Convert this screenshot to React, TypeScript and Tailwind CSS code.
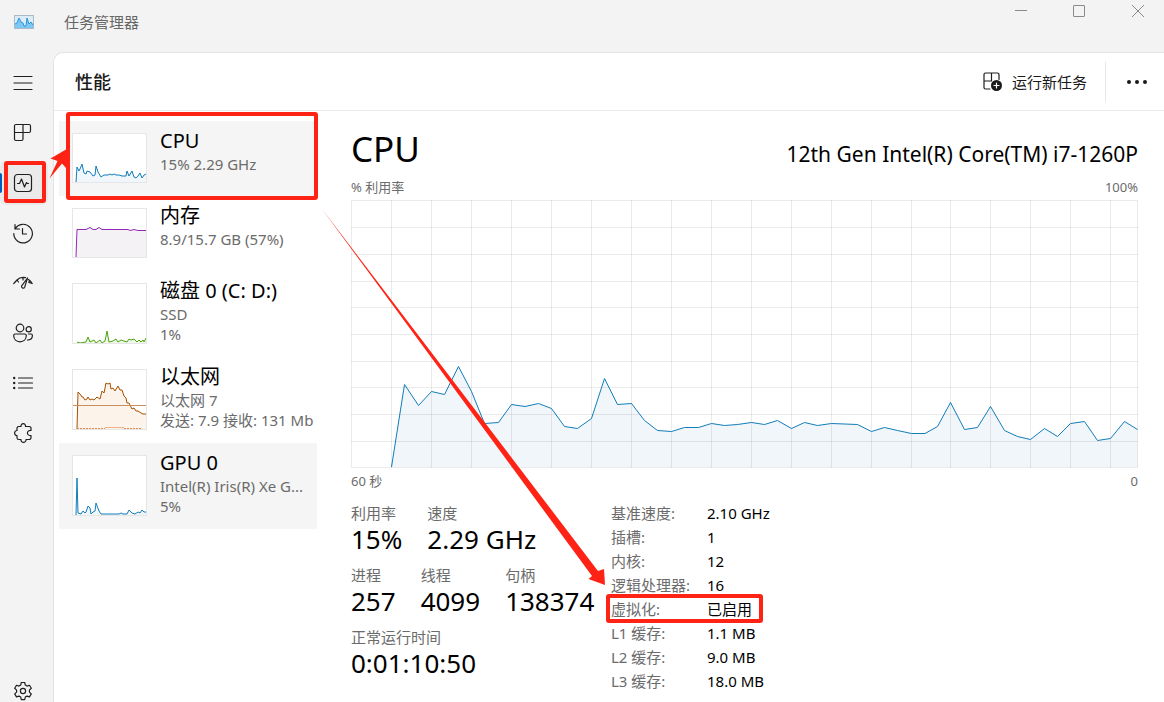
import { useState } from 'react';
import type { ReactNode } from 'react';

const UI_FONT = "font-['Noto_Sans','Noto_Sans_CJK_SC',sans-serif]";

interface Point {
  x: number;
  y: number;
}

function parse(points: string): Point[] {
  return points.split(' ').map((pair) => {
    const [x, y] = pair.split(',').map(Number);
    return { x, y };
  });
}

const CPU_HISTORY =
  '40.5,267 53.5,184.5 67.5,205.5 80.5,191.5 93.5,194.5 107.5,166.5 120.5,191.5 133.5,223.5 147.5,222.5 160.5,204.5 174,206.5 187.5,203.5 200.5,208.5 213.5,226.5 226.5,228.5 240.5,218.5 253.5,178.5 266.5,204.5 280.5,203.5 293.5,220.5 306.5,230.5 320.5,231.5 333.5,227.5 347.5,227.5 360.5,223.5 373.5,225.5 386.5,224.5 400.5,222.5 413.5,224.5 426.5,220.5 440.5,228.5 453.5,222.5 466.5,225.5 480.5,223.5 506.5,224.5 520.5,231.5 533.5,227.5 546.5,230.5 560.5,233.5 574,233.5 586.5,226.5 599.5,202.5 613.5,229.5 626.5,227.5 639.5,206.5 653.5,230.5 666.5,236.5 679.5,239.5 693.5,228.5 706.5,236.5 719.5,223.5 733.5,221.5 746.5,240.5 759.5,238.5 773.5,221.5 786.5,229.5';

const GRID_X = [40.5, 80.5, 120.5, 160.5, 200.5, 240.5, 280.5, 320.5, 360.5, 400.5, 440.5, 480.5, 520.5, 560.5, 599.5, 639.5, 679.5, 719.5, 759.5];
const GRID_Y = [27.5, 54.5, 81.5, 107.5, 134.5, 161.5, 187.5, 214.5, 241.5];

interface Resource {
  id: string;
  title: string;
  lines: string[];
  stroke: string;
  fill: string;
  height: number;
  points: string;
  marked?: boolean;
  hovered?: boolean;
  extra?: ReactNode;
}

const RESOURCES: Resource[] = [
  {
    id: 'cpu',
    title: 'CPU',
    lines: ['15% 2.29 GHz'],
    stroke: '#117dbb',
    fill: '#f1f6fa',
    height: 50,
    points:
      '4,49 5,34 7,38 8,36 10,31 12,40 14,41 15,38 18,39 21,43 23,42 24,33 26,39 29,44 32,42 36,42 38,41 40,42 42,41 44,42 47,42 50,43 54,43 55,38 57,43 60,38 62,44 64,45 66,43 68,40 70,45 72,42 74,41',
    marked: true,
  },
  {
    id: 'memory',
    title: '内存',
    lines: ['8.9/15.7 GB (57%)'],
    stroke: '#9528b4',
    fill: '#f4f2f4',
    height: 50,
    points: '4,49 5,21.5 14,21.5 18,19.5 21,21.5 24,21.5 27,19.5 30,21.5 56,21.5 58,22.5 62,21.5 66,22.5 74,22.5',
  },
  {
    id: 'disk',
    title: '磁盘 0 (C: D:)',
    lines: ['SSD', '1%'],
    stroke: '#4da60c',
    fill: '#eff7e9',
    height: 61,
    points:
      '5,59 8,60 14,59 16,54 18,59 22,57 24,60 28,57 30,60 33,58 35,48 37,59 41,58 44,56 46,59 49,57 52,58 55,59 57,56 59,57 62,56 65,59 67,57 69,59 71,57 72,59 74,55',
  },
  {
    id: 'ethernet',
    title: '以太网',
    lines: ['以太网 7', '发送: 7.9 接收: 131 Mb'],
    stroke: '#a74f01',
    fill: '#fcf3eb',
    height: 61,
    points:
      '5,60 6,23 8,25 10,28 11,28 13,31 15,30 16,28 18,31 20,30 22,31 25,28 28,30 30,22 32,24 34,14 36,15 38,14 39,20 41,19 43,22 46,17 48,21 50,21 52,27 54,29 55,34 57,34 60,40 62,39 64,42 66,42 69,44 71,45 74,45',
    extra: (
      <>
        <path d="M1 36.5H74" stroke="#c98f5c" />
        <path d="M5 59.500H33M52 59.500H70" stroke="#e08a50" strokeDasharray="2 1" />
        <path d="M33 58.500H52" stroke="#eeb18c" />
      </>
    ),
  },
  {
    id: 'gpu',
    title: 'GPU 0',
    lines: ['Intel(R) Iris(R) Xe G...', '5%'],
    stroke: '#117dbb',
    fill: '#f1f6fa',
    height: 61,
    points:
      '4,60 5,23 6,58 9,59 11,56 13,58 14,57 16,51 18,53 19,59 21,57 23,56 24,48 27,56 29,59 47,59 49,58 51,59 55,59 57,55 60,58 63,59 66,57 68,58 70,55 72,57 74,57',
    hovered: true,
  },
];

const SPECS = [
  ['基准速度:', '2.10 GHz'],
  ['插槽:', '1'],
  ['内核:', '12'],
  ['逻辑处理器:', '16'],
  ['虚拟化:', '已启用'],
  ['L1 缓存:', '1.1 MB'],
  ['L2 缓存:', '9.0 MB'],
  ['L3 缓存:', '18.0 MB'],
];

function Icon({ children }: { children: ReactNode }) {
  return (
    <svg
      className="h-5 w-5 shrink-0 overflow-visible"
      viewBox="0 0 20 20"
      fill="none"
      stroke="#1f1f1f"
      strokeWidth="1.2"
      strokeLinecap="round"
      strokeLinejoin="round"
      aria-hidden="true"
    >
      {children}
    </svg>
  );
}

const NAV_ITEMS = [
  {
    id: 'processes',
    label: '进程',
    icon: <path d="M3 1.500h13a1.500 1.500 0 0 1 1.500 1.500v5a1.500 1.500 0 0 1-1.500 1.500H10v6.500a1.500 1.500 0 0 1-1.500 1.500H3a1.500 1.500 0 0 1-1.500-1.500v-13a1.500 1.500 0 0 1 1.500-1.500zM1.500 9.500H10V1.500" />,
  },
  {
    id: 'performance',
    label: '性能',
    icon: (
      <>
        <rect x="1.500" y="1.500" width="17" height="17" rx="3" />
        <path d="M4.500 10.500H6.500L8.500 6L11.500 14L13.500 9.500L14.200 10.500H15.500" />
      </>
    ),
  },
  {
    id: 'history',
    label: '应用历史记录',
    icon: (
      <>
        <path d="M2 6A9.300 9.300 0 1 1 .8 10.500M2 1.500V6H6.500" />
        <path d="M9.500 5.500V11H13.500" />
      </>
    ),
  },
  {
    id: 'startup',
    label: '启动应用',
    icon: (
      <>
        <path d="M.8 10.500L4 7L5.500 9M4 7C6 4.800 9 4 12.500 4.600M10 4.500V7M14.500 5L11.700 14.200a1.700 1.700 0 0 1-3.200-1L14.500 5zM15.500 6.500C17 7.500 18.300 9 19.200 10.500M19.200 10.500L15.800 9.500L16.500 7.500" />
      </>
    ),
  },
  {
    id: 'users',
    label: '用户',
    icon: (
      <>
        <circle cx="7" cy="5" r="3.800" />
        <circle cx="15.700" cy="6.300" r="2.600" />
        <path d="M2.200 11h9.600a1.500 1.500 0 0 1 1.500 1.500c0 4-2.800 6.300-6.300 6.300S.7 16.500.7 12.500A1.500 1.500 0 0 1 2.200 11zM15.500 11H18a1.500 1.500 0 0 1 1.400 1.500c0 3.300-2 4.700-5 4.500" />
      </>
    ),
  },
  {
    id: 'details',
    label: '详细信息',
    icon: (
      <>
        <path d="M5.500 5H19.500M5.500 10H19.500M5.500 15H19.500" />
        <path d="M1.200 5h.01M1.200 10h.01M1.200 15h.01" strokeWidth="2.400" />
      </>
    ),
  },
  {
    id: 'services',
    label: '服务',
    icon: (
      <path d="M5 3.500H8C7.500-.3 13-.3 12.500 3.500H16A1.800 1.800 0 0 1 18 5.300V7.500C13.200 7 13.200 13 18 12.500V14.700A1.800 1.800 0 0 1 16 16.500H13C13.300 20.300 7.500 20.300 8 16.500H5.800A1.800 1.800 0 0 1 4 14.700V12.500C.8 12.500.8 7.500 4 7.500V4.800z" />
    ),
  },
];

function AreaPath({ points, base, stroke, fill }: { points: string; base: number; stroke: string; fill: string }) {
  const list = parse(points);
  const first = list[0];
  const last = list[list.length - 1];
  return (
    <>
      <polygon points={`${first.x},${base} ${points} ${last.x},${base}`} fill={fill} />
      <polyline points={points} fill="none" stroke={stroke} vectorEffect="non-scaling-stroke" />
    </>
  );
}

function ResourceItem({ item }: { item: Resource }) {
  return (
    <button
      type="button"
      className={`relative flex w-full items-start gap-[13px] pl-[13px] text-left ${
        item.height === 50 ? 'h-[75px]' : 'h-[86px]'
      } ${item.marked || item.hovered ? 'bg-[#f5f5f5]' : ''}`}
    >
      <svg className="mt-3 w-[75px] shrink-0 bg-white" height={item.height} viewBox={`0 0 75 ${item.height}`} aria-hidden="true">
        <AreaPath points={item.points} base={item.height - 1} stroke={item.stroke} fill={item.fill} />
        {item.extra}
        <rect x="0.500" y="0.500" width="74" height={item.height - 1} fill="none" stroke="#e6e6e6" />
      </svg>
      <span className="min-w-0 flex-1 overflow-hidden whitespace-nowrap pt-2">
        <span className="mb-px block text-[20px] leading-6 text-black">{item.title}</span>
        {item.lines.map((line) => (
          <span key={line} className="block text-[15px] leading-5 text-[#6b6b6b]">
            {line}
          </span>
        ))}
      </span>
      {item.marked && (
        <span className="absolute -top-[9px] -right-px -bottom-[4px] left-[7px] rounded-[3px] border-4 border-[#ff2316]" />
      )}
    </button>
  );
}

function Stat({ label, value }: { label: string; value: string }) {
  return (
    <div>
      <dt className="text-[15px] leading-5 text-[#6b6b6b]">{label}</dt>
      <dd className="text-[26px] leading-8 text-black">{value}</dd>
    </div>
  );
}

export default function App() {
  const [page, setPage] = useState('performance');

  return (
    <div className={`relative flex min-h-screen flex-col overflow-hidden bg-[#f3f3f3] text-black ${UI_FONT}`}>
      <header className="flex h-[52px] items-start justify-between">
        <div className="flex h-11 items-center gap-[30px] pl-[14px]">
          <svg className="h-[14px] w-5" viewBox="0 0 20 14" aria-hidden="true">
            <rect x="0.500" y="0.500" width="19" height="13" fill="#dcecf6" stroke="#a9b9c6" />
            <path d="M1 13V9L3 8L5 3L7 7L9 8L10 11L12 11L13 3L15 9L17 7L19 10V13z" fill="#7cc8f5" />
            <path d="M1 9L3 8L5 3L7 7L9 8L10 11L12 11L13 3L15 9L17 7L19 10" fill="none" stroke="#2b93da" />
          </svg>
          <h1 className="text-[15px] leading-5 text-[#666666]">任务管理器</h1>
        </div>
        <div className="flex">
          <button type="button" aria-label="最小化" className="flex h-[22px] w-[58px] items-center justify-center">
            <svg className="h-3 w-3" viewBox="0 0 12 12" stroke="#8a8a8a" aria-hidden="true">
              <path d="M0 5.500H12" />
            </svg>
          </button>
          <button type="button" aria-label="最大化" className="flex h-[22px] w-[58px] items-center justify-center">
            <svg className="h-3 w-3" viewBox="0 0 12 12" fill="none" stroke="#8a8a8a" aria-hidden="true">
              <rect x="0.500" y="0.500" width="11" height="11" rx="0.500" />
            </svg>
          </button>
          <button type="button" aria-label="关闭" className="flex h-[22px] w-14 items-center justify-center pl-1">
            <svg className="h-3 w-3" viewBox="0 0 12 12" stroke="#8a8a8a" aria-hidden="true">
              <path d="M0 0L12 12M12 0L0 12" />
            </svg>
          </button>
        </div>
      </header>

      <div className="flex flex-1">
        <nav className="flex w-[53px] shrink-0 flex-col pt-[6px]">
          <button type="button" aria-label="打开导航" className="flex h-[50px] items-center pl-[13px]">
            <Icon>
              <path d="M1 3.500H19M1 10H19M1 16.500H19" />
            </Icon>
          </button>
          {NAV_ITEMS.map((item) => (
            <button
              key={item.id}
              type="button"
              aria-label={item.label}
              aria-current={item.id === page ? 'page' : undefined}
              onClick={() => setPage(item.id)}
              className="relative flex h-[50px] items-center"
            >
              <span
                className={`flex h-11 w-12 items-center rounded-md pl-[13px] ${item.id === page ? 'bg-[#eaeaea]' : ''}`}
              >
                <Icon>{item.icon}</Icon>
              </span>
              {item.id === page && <span className="absolute left-0 h-5 w-[2px] rounded-r-sm bg-[#005fb8]" />}
              {item.id === 'performance' && (
                <span className="absolute top-[3px] left-1 h-[42px] w-[42px] rounded-[3px] border-4 border-[#ff2316]" />
              )}
            </button>
          ))}
          <button type="button" aria-label="设置" className="mt-auto flex h-[22px] items-center pl-[13px]">
            <Icon>
              <path d="M8.300 1.500h3.400l.6 2.600 1.700 1 2.500-.8 1.800 3-1.900 1.800v2l1.900 1.800-1.800 3-2.500-.8-1.700 1-.6 2.600H8.300l-.6-2.600-1.700-1-2.500.8-1.800-3 1.900-1.800v-2L1.700 7.300l1.800-3 2.500.8 1.700-1z" />
              <circle cx="10" cy="10" r="2.600" />
            </Icon>
          </button>
        </nav>

        <main className="flex min-w-0 flex-1 flex-col rounded-tl-[10px] border-t border-l border-[#e3e3e3] bg-white">
          <div className="flex h-[58px] items-center border-b border-[#ebebeb] pt-px pl-[21px]">
            <h2 className="text-[18px] leading-6 font-medium text-[#1a1a1a]">性能</h2>
            <button type="button" className="ml-auto flex items-center gap-[9px] pr-[18px]">
              <Icon>
                <path d="M7 17H2.500A1.500 1.500 0 0 1 1 15.500V2.500A1.500 1.500 0 0 1 2.500 1h12A1.500 1.500 0 0 1 16 2.500V7.500M1 9H8.500V1" />
                <circle cx="13.500" cy="13.500" r="5.500" fill="#1a1a1a" stroke="none" />
                <path d="M13.500 11V16M11 13.500H16" stroke="white" />
              </Icon>
              <span className="text-[15px] leading-5 text-[#1a1a1a]">运行新任务</span>
            </button>
            <div className="h-10 w-px bg-[#e8e8e8]" />
            <button type="button" aria-label="更多选项" className="flex h-10 w-[58px] items-center justify-center pl-1">
              <svg className="h-1 w-5" viewBox="0 0 20 4" fill="#1a1a1a" aria-hidden="true">
                <circle cx="2" cy="2" r="2" />
                <circle cx="10" cy="2" r="2" />
                <circle cx="18" cy="2" r="2" />
              </svg>
            </button>
          </div>

          <div className="flex flex-1 pt-[10px] pr-[26px] pl-[5px]">
            <aside className="w-[258px] shrink-0">
              {RESOURCES.map((item) => (
                <ResourceItem key={item.id} item={item} />
              ))}
            </aside>

            <section className="ml-[34px] min-w-0 flex-1">
              <div className="flex items-baseline justify-between pt-1">
                <h3 className="text-[35px] leading-[48px]">CPU</h3>
                <p className="text-[21px] leading-6">12th Gen Intel(R) Core(TM) i7-1260P</p>
              </div>
              <div className="mt-1 flex justify-between text-[13px] leading-5 text-[#6b6b6b]">
                <span>% 利用率</span>
                <span>100%</span>
              </div>
              <svg
                className="mt-[3px] block h-[268px] w-full"
                viewBox="0 0 787 268"
                preserveAspectRatio="none"
                role="img"
                aria-label="% 利用率"
              >
                <AreaPath points={CPU_HISTORY} base={267} stroke="#117dbb" fill="#f1f6fa" />
                <g stroke="#000000" strokeOpacity="0.080">
                  {GRID_X.map((x) => (
                    <path key={x} d={`M${x} 0V268`} />
                  ))}
                  {GRID_Y.map((y) => (
                    <path key={y} d={`M0 ${y}H787`} />
                  ))}
                  <rect x="0.500" y="0.500" width="786" height="267" fill="none" />
                </g>
              </svg>
              <div className="mt-[3px] flex justify-between text-[13px] leading-5 text-[#6b6b6b]">
                <span>60 秒</span>
                <span>0</span>
              </div>

              <div className="mt-[10px] flex items-start">
                <div className="flex w-[260px] shrink-0 flex-col gap-[10px] pt-[2px] whitespace-nowrap">
                  <dl className="flex gap-[25px]">
                    <Stat label="利用率" value="15%" />
                    <Stat label="速度" value="2.29 GHz" />
                  </dl>
                  <dl className="flex gap-[25px]">
                    <Stat label="进程" value="257" />
                    <Stat label="线程" value="4099" />
                    <Stat label="句柄" value="138374" />
                  </dl>
                  <dl>
                    <Stat label="正常运行时间" value="0:01:10:50" />
                  </dl>
                </div>
                <table className="text-left text-[15px] leading-6 whitespace-nowrap">
                  <tbody>
                    {SPECS.map(([label, value]) => (
                      <tr key={label} className="relative">
                        <th scope="row" className="w-24 p-0 font-normal text-[#6b6b6b]">
                          {label}
                        </th>
                        <td className="p-0">
                          {value}
                          {label === '虚拟化:' && (
                            <span className="absolute -top-[3px] -left-[5px] h-[29px] w-[157px] rounded-[3px] border-4 border-[#ff2316]" />
                          )}
                        </td>
                      </tr>
                    ))}
                  </tbody>
                </table>
              </div>
            </section>
          </div>
        </main>
      </div>

      <svg className="pointer-events-none absolute top-0 left-0 h-[702px] w-[1164px]" viewBox="0 0 1164 702" fill="#ff2316" aria-hidden="true">
        <path d="M66 149.500L50.500 158.500L57.500 161L49.500 178.500L62 163.500L66 168z" />
        <path d="M322 209L598 571L604 569L605 585L588.500 579L592 576z" />
      </svg>
    </div>
  );
}
